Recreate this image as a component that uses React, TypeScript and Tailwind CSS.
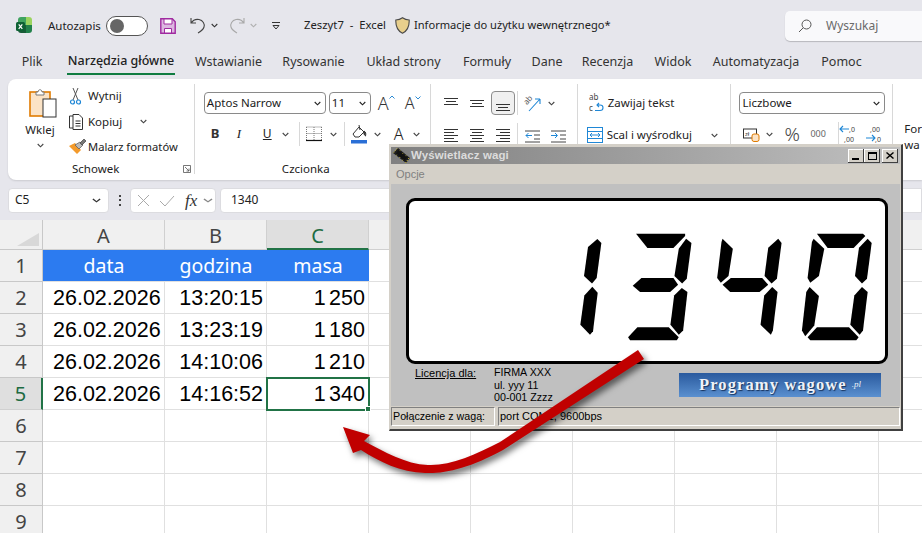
import React from "react";

const Chev = ({ c = "#444", w = 7 }: { c?: string; w?: number }) => (
  <svg width={w} height="5" viewBox="0 0 7 5" className="shrink-0" preserveAspectRatio="none"><path d="M.7 1 3.5 3.8 6.3 1" fill="none" stroke={c} strokeWidth="1.1" /></svg>
);

const ExcelLogo = () => (
  <svg width="16" height="17" viewBox="0 0 16 17">
    <path d="M5 0h5v8H2V3a3 3 0 0 1 3-3z" fill="#3fa35f" />
    <path d="M10 0h3a3 3 0 0 1 3 3v5h-6z" fill="#9bd45f" />
    <path d="M2 8h8v8H5a3 3 0 0 1-3-3z" fill="#185c37" />
    <path d="M10 8h6v5a3 3 0 0 1-3 3h-3z" fill="#21814a" />
    <rect x="0" y="5" width="9" height="9" rx="1.5" fill="#0e6134" />
    <path d="M2.7 7.3 6.3 11.8M6.3 7.3 2.7 11.8" stroke="#fff" strokeWidth="1.2" />
  </svg>
);

const Lines = ({ rows }: { rows: [number, number, number][] }) => (
  <svg width="16" height="16" viewBox="0 0 16 16">
    {rows.map(([x1, x2, y], i) => (
      <path key={i} d={`M${x1} ${y + 0.5}H${x2}`} stroke="#333" strokeWidth="1" />
    ))}
  </svg>
);

const Sep = ({ h = "h-[24px]" }: { h?: string }) => <div className={`w-px bg-[#d8d8d8] ${h}`} />;

const Select = ({ label, w }: { label: string; w: string }) => (
  <div className={`${w} h-[22px] flex items-center justify-between border border-[#8a8a8a] rounded-[4px] pl-[2px] pr-[4px] text-[11.5px] text-[#1a1a1a]`}>
    <span>{label}</span>
    <Chev c="#222" />
  </div>
);

const tabs: [string, string][] = [
  ["Plik", "w-[20px] ml-[22px]"],
  ["Narzędzia główne", "w-[108px] ml-[25px]"],
  ["Wstawianie", "w-[65px] ml-[21px]"],
  ["Rysowanie", "w-[61px] ml-[22px]"],
  ["Układ strony", "w-[73px] ml-[23px]"],
  ["Formuły", "w-[46px] ml-[24px]"],
  ["Dane", "w-[30px] ml-[22px]"],
  ["Recenzja", "w-[51px] ml-[20px]"],
  ["Widok", "w-[38px] ml-[21px]"],
  ["Automatyzacja", "w-[84px] ml-[22px]"],
  ["Pomoc", "w-[41px] ml-[23px]"],
];

const rows = [
  ["26.02.2026", "13:20:15", "1 250"],
  ["26.02.2026", "13:23:19", "1 180"],
  ["26.02.2026", "14:10:06", "1 210"],
  ["26.02.2026", "14:16:52", "1 340"],
];

const extra = [0, 1, 2, 3, 4, 5];

const segs = [
  "112,121 124,133 110,238 96,254 72,232 84,145",
  "97,264 113,282 99,397 90,408 61,378 73,290",
  "228,105 375,105 375,112 340,148 262,148",
  "378,120 394,133 380,240 366,254 343,232 356,150",
  "218,261 244,238 340,238 354,258 330,280 240,280",
  "365,268 382,280 369,395 356,408 331,378 342,290",
  "232,385 326,385 356,415 350,424 210,424 204,415",
  "487,120 518,150 505,232 482,252 471,238 484,130",
  "487,258 512,238 606,238 624,258 598,280 510,280",
  "654,120 664,133 650,240 634,254 613,232 624,147",
  "636,265 652,280 638,395 632,408 601,378 612,290",
  "770,105 908,105 915,112 880,148 802,148",
  "760,120 792,150 776,232 750,252 742,238 755,130",
  "922,120 934,133 920,240 905,254 884,232 896,147",
  "748,265 776,292 762,380 735,412 725,395 738,280",
  "905,265 922,280 908,395 898,408 870,378 882,290",
  "770,385 866,385 895,415 888,424 750,424 742,415",
];

export default function App() {
  return (
    <div className="relative w-[922px] h-[533px] overflow-hidden bg-[#e6e6ec] font-['Noto_Sans',sans-serif] text-[#222]">
      {/* Title bar */}
      <div className="h-[50px] flex items-center text-[12px] pt-px">
        <div className="ml-[16px] w-[32px]"><ExcelLogo /></div>
        <span className="w-[58px] text-[11.5px] whitespace-nowrap">Autozapis</span>
        <div className="w-[42px] h-[20px] rounded-full border border-[#555] bg-white flex items-center pl-[3px]">
          <div className="w-[14px] h-[14px] rounded-full bg-[#666]" />
        </div>
        <svg className="ml-[12px]" width="16" height="16" viewBox="0 0 16 16">
          <path d="M.8.8h11.5l2.9 2.9v11.5H.8z" fill="#dcb8e0" stroke="#a02aa0" strokeWidth="1.4" />
          <path d="M4 1v5h8V1zM4.5 15v-4.5h7V15z" fill="#fff" stroke="#a02aa0" strokeWidth="1" />
        </svg>
        <svg className="ml-[14px]" width="16" height="17" viewBox="0 0 16 17">
          <path d="M1 1v5h5M1.2 6C3 3 6 2 9 2.500c4 .8 6 4.500 5 7.500-.6 2-2.500 4-6 6" fill="none" stroke="#444" strokeWidth="1.1" />
        </svg>
        <div className="ml-[5px] w-[18px]"><Chev c="#333" /></div>
        <svg width="16" height="17" viewBox="0 0 16 17">
          <path d="M15 1v5h-5M14.800 6C13 3 10 2 7 2.500c-4 .8-6 4.500-5 7.500.6 2 2.500 4 6 6" fill="none" stroke="#a8a8a8" strokeWidth="1.1" />
        </svg>
        <div className="ml-[5px] w-[22px]"><Chev c="#b0b0b0" /></div>
        <svg width="8" height="8" viewBox="0 0 8 8"><path d="M0 .5h8" stroke="#333" /><path d="M1 3.500h6L4 7z" fill="none" stroke="#333" /></svg>
        <span className="ml-[24px] w-[91px] whitespace-pre text-[11.3px]">Zeszyt7  -  Excel</span>
        <svg width="15" height="17" viewBox="0 0 15 17">
          <path d="M7.500.8C5.500 2.300 3 3 .8 3c-.2 6 1 10.500 6.700 13.200C13.200 13.500 14.400 9 14.200 3 12 3 9.500 2.300 7.500.8z" fill="#e8cf8c" stroke="#4a4a4a" strokeWidth="1.1" />
        </svg>
        <span className="ml-[4px] text-[11.1px] whitespace-nowrap w-[197px]">Informacje do użytku wewnętrznego*</span>
        <div className="ml-[174px] w-[137px] h-[30px] bg-[#f9f9fb] rounded-l-[5px] shadow-[0_1px_1px_rgba(0,0,0,.2)] flex items-center pl-[13px] text-[#6a6a6a]">
          <svg width="14" height="14" viewBox="0 0 14 14"><circle cx="8.500" cy="5.500" r="4.500" fill="none" stroke="#555" /><path d="M5.200 8.800 1 13" stroke="#555" /></svg>
          <span className="ml-[14px] text-[12px]">Wyszukaj</span>
        </div>
      </div>

      {/* Tabs */}
      <div className="h-[29px] flex text-[12.5px] text-[#333]">
        {tabs.map(([t, cls], i) => (
          <div key={t} className={`${cls} h-[25px] flex items-center justify-center whitespace-nowrap ${i === 1 ? "border-b-2 border-[#107c41] font-medium text-[#222]" : ""}`}>{t}</div>
        ))}
      </div>

      {/* Ribbon */}
      <div className="ml-[8px] h-[101px] bg-white rounded-l-[8px] flex text-[11.5px] text-[#222] shadow-[0_1px_2px_rgba(0,0,0,.12)]">
        {/* Schowek */}
        <div className="w-[186px] flex flex-col">
          <div className="h-[81px] flex">
            <div className="w-[60px] pl-[4px] flex flex-col items-center pt-[9px]">
              <svg width="28" height="30" viewBox="0 0 28 30" className="ml-[6px]">
                <rect x="1" y="4" width="20" height="24" fill="#fbe3c6" stroke="#e07b00" strokeWidth="1.6" />
                <path d="M7 4h2c0-3 4-3 4 0h2v3H7z" fill="#fff" stroke="#777" />
                <rect x="14" y="11" width="13" height="18" fill="#fff" stroke="#333" />
              </svg>
              <span className="mt-[4px] h-[16px] leading-[16px]">Wklej</span>
              <div className="mt-[5px]"><Chev /></div>
            </div>
            <div className="pt-[4px] flex flex-col">
              <div className="h-[26px] flex items-center">
                <svg className="w-[20px]" width="20" height="18" viewBox="0 0 20 18">
                  <path d="M5 1 10 13M10 1 5 13" stroke="#555" fill="none" />
                  <circle cx="4.500" cy="15" r="2" fill="none" stroke="#1f87d6" strokeWidth="1.200" />
                  <circle cx="10.500" cy="15" r="2" fill="none" stroke="#1f87d6" strokeWidth="1.200" />
                </svg>
                <span>Wytnij</span>
              </div>
              <div className="h-[26px] flex items-center">
                <svg className="w-[20px]" width="20" height="18" viewBox="0 0 20 18">
                  <path d="M5 3H1.500v12H5" fill="none" stroke="#333" />
                  <path d="M5 1.500h6l3.500 3.500v11.500H5z" fill="none" stroke="#333" />
                  <path d="M7.500 8h5M7.500 10.500h5M7.500 13h5" stroke="#333" />
                </svg>
                <span className="w-[52px]">Kopiuj</span>
                <Chev />
              </div>
              <div className="h-[26px] flex items-center">
                <svg className="w-[20px]" width="20" height="18" viewBox="0 0 20 18">
                  <path d="M1 8 7 5l6 7-4 4z" fill="#f39a2b" />
                  <path d="M7 7 12 4l3 3-4 4z" fill="#b9b9b9" stroke="#555" strokeWidth=".7" />
                  <path d="m12 5 4-4 2 2-4 4z" fill="#777" stroke="#444" strokeWidth=".7" />
                </svg>
                <span className="whitespace-nowrap text-[11.2px]">Malarz formatów</span>
              </div>
            </div>
          </div>
          <div className="h-[18px] flex items-center pl-[64px]">
            <span className="w-[46px] text-center whitespace-nowrap">Schowek</span>
            <svg className="ml-[65px]" width="8" height="8" viewBox="0 0 8 8"><path d="M.5 7.500V.5h7v7zM2 2l4 4M6 3.500V6H3.500" fill="none" stroke="#555" strokeWidth=".8" /></svg>
          </div>
        </div>
        <div className="mt-[5px]"><Sep h="h-[90px]" /></div>

        {/* Czcionka */}
        <div className="w-[235px] flex flex-col">
          <div className="h-[81px] pl-[9px] pt-[13px]">
            <div className="flex items-center">
              <Select label="Aptos Narrow" w="w-[122px]" />
              <div className="ml-[3px]"><Select label="11" w="w-[42px]" /></div>
              <div className="ml-[7px] w-[27px] flex items-start text-[18px] font-light leading-none text-[#333]">A<svg className="mt-[1px]" width="6" height="4" viewBox="0 0 6 4"><path d="M.5 3.500 3 1l2.500 2.500" fill="none" stroke="#2a8ad4" /></svg></div>
              <div className="w-[22px] flex items-start text-[16px] font-light leading-none text-[#333]">A<svg className="mt-[1px]" width="6" height="4" viewBox="0 0 6 4"><path d="M.5.5 3 3 5.500.5" fill="none" stroke="#2a8ad4" /></svg></div>
            </div>
            <div className="mt-[8px] h-[24px] flex items-center">
              <span className="ml-[7px] w-[26px] font-bold text-[13px] text-[#333]">B</span>
              <span className="w-[26px] italic text-[13px] font-['Liberation_Serif',serif]">I</span>
              <span className="w-[19px] underline text-[12px]">U</span>
              <Chev />
              <div className="ml-[10px]"><Sep /></div>
              <svg className="ml-[6px]" width="16" height="16" viewBox="0 0 16 16"><path d="M.5 1v13M15.500 1v13M.5 1h15M8 1v13M.5 7.500h15" stroke="#777" strokeDasharray="1 1" fill="none" /><path d="M0 14.500h16" stroke="#111" strokeWidth="1.200" /></svg>
              <div className="ml-[8px]"><Chev /></div>
              <div className="ml-[7px]"><Sep /></div>
              <svg className="ml-[6px]" width="17" height="20" viewBox="0 0 17 20"><path d="M2 10 8 3l5 5-5 5H4z" fill="none" stroke="#333" /><path d="m8 1 1 5M13 7c2 1 2 3 1.500 5-1.500-1-2-3-1.500-5z" fill="#444" stroke="#333" /><rect y="16" width="16" height="3.500" fill="#2a6fd6" /></svg>
              <div className="ml-[6px]"><Chev /></div>
              <span className="ml-[13px] w-[19px] text-[16px] font-light leading-none">A</span>
              <Chev />
            </div>
          </div>
          <div className="h-[18px] pl-[87px] flex items-center"><span className="w-[46px] text-center whitespace-nowrap">Czcionka</span></div>
        </div>
        <div className="mt-[5px]"><Sep h="h-[90px]" /></div>

        {/* Wyrównanie */}
        <div className="w-[300px] flex">
          <div className="w-[146px] pt-[12px] pl-[13px]">
            <div className="h-[24px] flex items-center">
              <div className="w-[26px]"><Lines rows={[[0, 14, 3], [2, 12, 6], [0, 14, 9]]} /></div>
              <div className="w-[21px]"><Lines rows={[[0, 14, 5], [2, 12, 8], [0, 14, 11]]} /></div>
              <div className="w-[24px] h-[24px] rounded-[4px] border border-[#8c8c8c] bg-[#f0f0f0] flex items-center justify-center"><Lines rows={[[1, 15, 9], [3, 13, 12], [1, 15, 15]]} /></div>
              <div className="ml-[2px]"><Sep /></div>
              <svg className="ml-[6px] overflow-visible" width="18" height="20" viewBox="0 0 18 20">
                <text x="0" y="10" fontSize="8" fill="#555" transform="rotate(-50 4 8)">ab</text>
                <path d="M5 18 16 6M16 6h-5M16 6v5" stroke="#1f87d6" strokeWidth="1.100" fill="none" />
              </svg>
              <div className="ml-[6px]"><Chev /></div>
            </div>
            <div className="mt-[8px] h-[24px] flex items-center">
              <div className="w-[26px]"><Lines rows={[[0, 14, 2], [0, 10, 5], [0, 14, 8], [0, 10, 11], [0, 14, 14]]} /></div>
              <div className="w-[26px]"><Lines rows={[[0, 14, 2], [2, 12, 5], [0, 14, 8], [2, 12, 11], [0, 14, 14]]} /></div>
              <div className="w-[21px]"><Lines rows={[[0, 14, 2], [4, 14, 5], [0, 14, 8], [4, 14, 11], [0, 14, 14]]} /></div>
              <Sep />
              <svg className="ml-[7px]" width="15" height="15" viewBox="0 0 15 15"><path d="M0 3h15M9 7h6M9 11h6M0 14h15" stroke="#444" /><path d="M7 7.500H1M3.500 5 1 7.500 3.500 10" stroke="#1f87d6" fill="none" /></svg>
              <svg className="ml-[11px]" width="15" height="15" viewBox="0 0 15 15"><path d="M0 3h15M9 7h6M9 11h6M0 14h15" stroke="#444" /><path d="M0 7.500h6M4 5l2.500 2.500L4 10" stroke="#1f87d6" fill="none" /></svg>
            </div>
          </div>
          <div className="mt-[5px]"><Sep h="h-[90px]" /></div>
          <div className="pt-[12px] flex-1">
            <div className="h-[24px] flex items-center pl-[11px]">
              <svg className="overflow-visible" width="16" height="20" viewBox="0 0 16 20">
                <text x="0" y="7" fontSize="8" fill="#444">ab</text>
                <text x="0" y="17.500" fontSize="8" fill="#444">c</text>
                <path d="M6 17.500h5c4 0 4-5.500 0-5.500H8M10 10 8 12l2 2" fill="none" stroke="#1f87d6" strokeWidth="1.100" />
              </svg>
              <span className="ml-[3px] whitespace-nowrap text-[11.5px]">Zawijaj tekst</span>
            </div>
            <div className="mt-[8px] h-[24px] flex items-center pl-[9px]">
              <svg width="16" height="16" viewBox="0 0 16 16"><rect x=".5" y=".5" width="15" height="15" fill="none" stroke="#1f87d6" /><path d="M.5 4.500h15M.5 11.500h15M3 8h10M5 6 3 8l2 2M11 6l2 2-2 2" fill="none" stroke="#1f87d6" /></svg>
              <span className="ml-[4px] w-[104px] whitespace-nowrap text-[11.5px]">Scal i wyśrodkuj</span>
              <Chev />
            </div>
          </div>
        </div>
        <div className="mt-[5px]"><Sep h="h-[90px]" /></div>

        {/* Liczba */}
        <div className="w-[161px] pl-[8px] pt-[13px]">
          <Select label="Liczbowe" w="w-[146px]" />
          <div className="mt-[8px] h-[24px] flex items-center">
            <svg className="ml-[4px]" width="17" height="16" viewBox="0 0 17 16"><rect x=".5" y="3" width="13" height="9" fill="none" stroke="#333" /><text x="2" y="10" fontSize="6" fill="#333">zł</text><rect x="9" y="8" width="7" height="7.500" rx="2" fill="#fbe3c6" stroke="#e07b00" /></svg>
            <div className="ml-[6px]"><Chev /></div>
            <span className="ml-[11px] text-[19px] font-light leading-none w-[26px] text-[#444]">%</span>
            <span className="text-[9px] text-[#666] w-[28px]">000</span>
            <Sep />
            <svg className="overflow-visible" width="17" height="18" viewBox="0 0 17 18">
              <path d="M10 4H1M4 1 1 4l3 3" fill="none" stroke="#1f87d6" strokeWidth="1.100" />
              <text x="10" y="6.500" fontSize="7" fill="#444">,0</text>
              <text x="5" y="16.500" fontSize="7" fill="#444">,00</text>
            </svg>
            <svg className="ml-[9px] overflow-visible" width="17" height="18" viewBox="0 0 17 18">
              <text x="5" y="6.500" fontSize="7" fill="#444">,00</text>
              <path d="M1 13h9M7 10l3 3-3 3" fill="none" stroke="#1f87d6" strokeWidth="1.100" />
              <text x="10" y="16.500" fontSize="7" fill="#444">,0</text>
            </svg>
          </div>
        </div>
        <div className="mt-[5px]"><Sep h="h-[90px]" /></div>
        <div className="pl-[11px] pt-[42px] text-[11.5px] leading-[16px]">
          <div>For</div>
          <div>wa</div>
        </div>
      </div>

      {/* Formula bar */}
      <div className="h-[40px] flex items-center">
        <div className="ml-[8px] w-[101px] h-[25px] bg-white rounded-[4px] border border-[#dcdce0] flex items-center justify-between pl-[6px] pr-[7px] text-[12px]">
          <span>C5</span><Chev w={9} c="#333" />
        </div>
        <div className="ml-[10px] w-[3px] flex flex-col gap-[2.500px]">
          <span className="w-[2px] h-[2px] bg-[#444]" /><span className="w-[2px] h-[2px] bg-[#444]" /><span className="w-[2px] h-[2px] bg-[#444]" />
        </div>
        <div className="ml-[8px] w-[86px] h-[25px] bg-white rounded-[4px] border border-[#dcdce0] flex items-center pl-[6px]">
          <svg width="13" height="13" viewBox="0 0 13 13"><path d="m1 1 11 11M12 1 1 12" stroke="#aaa" /></svg>
          <svg className="ml-[9px]" width="16" height="13" viewBox="0 0 16 13"><path d="m1 7 5 5 9-10" stroke="#aaa" fill="none" /></svg>
          <i className="ml-[10px] w-[18px] font-['Liberation_Serif',serif] text-[17px] leading-none text-[#333]">fx</i>
          <Chev w={10} c="#888" />
        </div>
        <div className="ml-[4px] flex-1 h-[25px] bg-white rounded-l-[4px] border border-[#dcdce0] flex items-center pl-[10px] text-[12px]">1340</div>
      </div>

      {/* Sheet */}
      <div className="grid grid-cols-[43px_122px_102px_102px_repeat(6,102px)] grid-rows-[30px_repeat(9,32px)] bg-white font-['Liberation_Sans',sans-serif]">
        <div className="bg-[#f0f0f0] border-r border-b border-[#c8c8c8] flex items-end justify-end pr-[3px] pb-[3px]">
          <svg width="22" height="13" viewBox="0 0 22 13"><path d="M22 0v13H0z" fill="#d8d8d8" /></svg>
        </div>
        {["A", "B", "C"].map((c) => (
          <div key={c} className={`flex items-center justify-center pt-[3px] text-[20px] font-['Noto_Sans',sans-serif] ${c === "C" ? "bg-[#dfdfdf] border-b-2 border-[#217346] text-[#1d6b42] border-r border-r-[#d0d0d0]" : "bg-[#f0f0f0] border-b border-r border-[#d0d0d0] text-[#444]"}`}>{c}</div>
        ))}
        {extra.map((i) => <div key={i} className="bg-[#f0f0f0] border-b border-r border-[#d0d0d0]" />)}

        <div className="bg-[#f0f0f0] border-r border-b border-[#c8c8c8] flex items-center justify-center pt-px text-[20px] text-[#444] font-['Noto_Sans',sans-serif]">1</div>
        {["data", "godzina", "masa"].map((h) => (
          <div key={h} className="bg-[#2c7bf0] border-b border-[#e0e0e0] flex items-center justify-center pt-px text-white text-[19.5px] font-['Noto_Sans',sans-serif]">{h}</div>
        ))}
        {extra.map((i) => <div key={i} className="border-r border-b border-[#e0e0e0]" />)}

        {rows.map((r, i) => (
          <React.Fragment key={i}>
            <div className={`flex items-center justify-center border-b pt-px text-[20px] font-['Noto_Sans',sans-serif] ${i === 3 ? "bg-[#dfdfdf] border-r-2 border-r-[#217346] border-b-[#d0d0d0] text-[#1d6b42]" : "bg-[#f0f0f0] border-r border-[#c8c8c8] text-[#444]"}`}>{i + 2}</div>
            <div className="border-r border-b border-[#e0e0e0] flex items-center pl-[10px] pt-px text-[21.500px] text-black">{r[0]}</div>
            <div className="border-r border-b border-[#e0e0e0] flex items-center justify-end pr-[3px] pt-px text-[21.500px] text-black">{r[1]}</div>
            <div className={`relative border-r border-b border-[#e0e0e0] flex items-center justify-end pr-[3px] pt-px text-[21.500px] text-black [word-spacing:-2.500px] ${i === 3 ? "outline-2 outline-[#217346] -outline-offset-1" : ""}`}>
              {r[2]}
              {i === 3 && <span className="absolute right-[-3px] bottom-[-3px] w-[6px] h-[6px] bg-[#217346] border border-white" />}
            </div>
            {extra.map((k) => <div key={k} className="border-r border-b border-[#e0e0e0]" />)}
          </React.Fragment>
        ))}

        {[6, 7, 8, 9].map((n) => (
          <React.Fragment key={n}>
            <div className="bg-[#f0f0f0] border-r border-b border-[#c8c8c8] flex items-center justify-center pt-px text-[20px] text-[#444] font-['Noto_Sans',sans-serif]">{n}</div>
            {[0, 1, 2].map((k) => <div key={k} className="border-r border-b border-[#e0e0e0]" />)}
            {extra.map((k) => <div key={k} className="border-r border-b border-[#e0e0e0]" />)}
          </React.Fragment>
        ))}
      </div>

      {/* Floating legacy window */}
      <div className="absolute left-[389px] top-[144px] w-[514px] h-[287px] bg-[#d4d0c8] border-t border-l border-t-[#d4d0c8] border-l-[#d4d0c8] border-r-2 border-b-2 border-r-[#404040] border-b-[#404040] px-[1px] pt-[2px] pb-[2px] flex flex-col font-['Liberation_Sans',sans-serif] text-[11px] text-black">
        <div className="h-[17px] shrink-0 bg-gradient-to-r from-[#808080] to-[#c0c0c0] flex items-center pl-[2px]">
          <svg width="17" height="16" viewBox="0 0 17 16">
            <path d="M5 0 17 10l-4 5L0 5z" fill="#1c1c1c" />
            <path d="M4 .5.500 5M7 2.500 3.500 7.500M10 5 6.500 10M13 7.500 9.500 12.500M16 10 12.500 15" stroke="#e6d23c" strokeWidth="1" strokeDasharray="1 1.500" />
            <path d="M5.500 2 14 9.500 11.500 12.500 3 5.500z" fill="#111" />
          </svg>
          <span className="ml-[1px] font-bold text-[11.5px] tracking-[.1px] text-[#dcdcdc] whitespace-nowrap">Wyświetlacz wagi</span>
          <div className="ml-auto mr-[2px] flex">
            {["min", "max"].map((b) => (
              <div key={b} className="w-[16px] h-[14px] bg-[#d4d0c8] shadow-[inset_-1px_-1px_#404040,inset_1px_1px_#fff] flex items-center justify-center">
                {b === "min" ? <span className="w-[7px] h-[2px] bg-black mt-[6px] -ml-[2px]" /> : <span className="w-[9px] h-[8px] border border-black border-t-2" />}
              </div>
            ))}
            <div className="ml-[2px] w-[16px] h-[14px] bg-[#d4d0c8] shadow-[inset_-1px_-1px_#404040,inset_1px_1px_#fff] flex items-center justify-center">
              <svg width="8" height="7" viewBox="0 0 8 7"><path d="m.5.5 7 6M7.500.5l-7 6" stroke="#000" strokeWidth="1.400" /></svg>
            </div>
          </div>
        </div>
        <div className="h-[20px] shrink-0 flex items-center pl-[5px] text-[#808080]">Opcje</div>
        <div className="flex-1 bg-[#c0c0c0] pt-[14px] pl-[15px]">
          <div className="w-[482px] h-[166px] bg-white border-[3px] border-black rounded-[9px] flex justify-end pr-[13px] pt-[32px]">
            <svg width="292" height="107.500" viewBox="60 103 875 322">
              {segs.map((p, i) => <polygon key={i} points={p} fill="#000" />)}
            </svg>
          </div>
          <div className="flex">
            <span className="ml-[9px] mt-[3px] w-[79px] underline leading-[13px] whitespace-nowrap">Licencja dla:</span>
            <div className="mt-[2px] w-[185px] leading-[12.500px] text-[10.7px]">
              <div>FIRMA XXX</div>
              <div>ul. yyy 11</div>
              <div>00-001 Zzzz</div>
            </div>
            <div className="mt-[9px] w-[202px] h-[24px] bg-gradient-to-b from-[#2a5a9e] to-[#5a90d0] flex items-center justify-center gap-[5px] text-[#eef2f8] font-['Liberation_Serif',serif]">
              <span className="text-[16.5px] font-bold tracking-[1.1px] [text-shadow:1px_1px_1px_#16325c] whitespace-nowrap">Programy wagowe</span>
              <span className="text-[9px] italic">.pl</span>
            </div>
          </div>
        </div>
        <div className="h-[21px] shrink-0 flex gap-[3px] pt-px bg-[#d4d0c8]">
          <div className="w-[104px] h-[19px] border border-t-[#808080] border-l-[#808080] border-r-white border-b-white flex items-center pl-[1px] whitespace-nowrap text-[10.7px]">Połączenie z wagą:</div>
          <div className="flex-1 h-[19px] border border-t-[#808080] border-l-[#808080] border-r-white border-b-white flex items-center pl-[1px]">port COM1, 9600bps</div>
        </div>
      </div>

      {/* Annotation arrow */}
      <svg className="absolute left-0 top-0 pointer-events-none drop-shadow-[3px_4px_3px_rgba(0,0,0,0.55)]" width="922" height="533" viewBox="0 0 922 533">
        <path d="M638 350 644 359 503 450C470 468 445 474 425 473 400 472 380 462 361 450L353 453 343 427 370 435 364 441C385 452 405 464 428 465 450 466 475 455 500 442Z" fill="#c00000" />
      </svg>
    </div>
  );
}
